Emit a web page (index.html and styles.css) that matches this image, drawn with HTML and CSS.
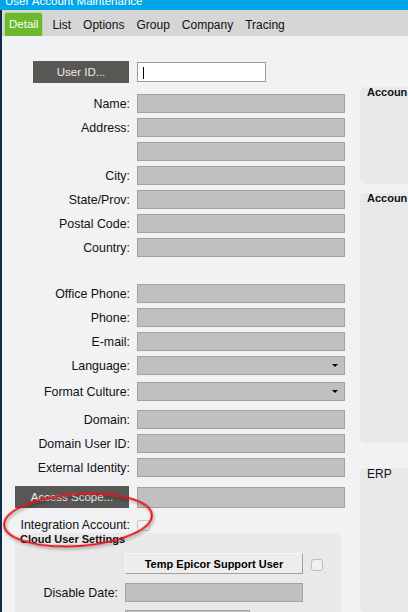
FILE: index.html
```html
<!DOCTYPE html>
<html lang="en">
<head>
<meta charset="UTF-8">
<meta name="viewport" content="width=device-width, initial-scale=1.0">
<title>User Account Maintenance</title>
<link rel="stylesheet" href="styles.css">
</head>
<body>

<div class="window">
    <div class="titlebar"><span>User Account Maintenance</span></div>

    <div class="frame">
        <!-- Tabs -->
        <div class="tabs">
            <div class="tab active">Detail</div>
            <div class="tab">List</div>
            <div class="tab">Options</div>
            <div class="tab">Group</div>
            <div class="tab">Company</div>
            <div class="tab">Tracing</div>
        </div>

        <div class="content">
            <!-- Detail form -->
            <div class="form">
                <div class="row row-btn row-id">
                    <button class="dark-btn btn-userid">User ID...</button>
                    <div class="field field-white"><span class="caret"></span></div>
                </div>
                <div class="row"><label>Name:</label><input class="field" readonly></div>
                <div class="row"><label>Address:</label><input class="field" readonly></div>
                <div class="row"><label></label><input class="field" readonly></div>
                <div class="row"><label>City:</label><input class="field" readonly></div>
                <div class="row"><label>State/Prov:</label><input class="field" readonly></div>
                <div class="row"><label>Postal Code:</label><input class="field" readonly></div>
                <div class="row row-gap-lg"><label>Country:</label><input class="field" readonly></div>

                <div class="row"><label>Office Phone:</label><input class="field" readonly></div>
                <div class="row"><label>Phone:</label><input class="field" readonly></div>
                <div class="row"><label>E-mail:</label><input class="field" readonly></div>
                <div class="row row-gap-sm"><label>Language:</label><div class="field combo"><span class="arrow"></span></div></div>
                <div class="row row-gap-md"><label>Format Culture:</label><div class="field combo"><span class="arrow"></span></div></div>

                <div class="row"><label>Domain:</label><input class="field" readonly></div>
                <div class="row"><label>Domain User ID:</label><input class="field" readonly></div>
                <div class="row row-gap-md"><label>External Identity:</label><input class="field" readonly></div>
                <div class="row row-btn">
                    <button class="dark-btn btn-scope">Access Scope...</button>
                    <input class="field field-tall" readonly>
                </div>
                <div class="row row-check">
                    <label>Integration Account:</label>
                    <span class="checkbox"></span>
                </div>

                <!-- Cloud settings -->
                <div class="cloud">
                    <h4 class="cloud-title">Cloud User Settings</h4>
                    <div class="cloud-row cloud-row-btn">
                        <span></span>
                        <button class="light-btn">Temp Epicor Support User</button>
                        <span class="checkbox checkbox-round"></span>
                    </div>
                    <div class="cloud-row">
                        <label>Disable Date:</label>
                        <input class="field" readonly>
                    </div>
                    <div class="cloud-row">
                        <label></label>
                        <input class="field field-short" readonly>
                    </div>
                </div>
            </div>

            <!-- Right side groups (cut off by the window edge) -->
            <div class="side">
                <div class="group group-a"><h4>Accoun</h4></div>
                <div class="group group-b"><h4>Accoun</h4></div>
                <div class="group group-c"><h4 class="plain">ERP</h4></div>
            </div>
        </div>
    </div>

    <!-- red markup ellipse drawn over the screenshot -->
    <svg class="highlight" width="170" height="70" viewBox="0 0 170 70">
        <defs>
            <filter id="soft" x="-10%" y="-20%" width="120%" height="140%">
                <feDropShadow dx="1" dy="2" stdDeviation="1.4" flood-color="#000" flood-opacity="0.35"/>
            </filter>
        </defs>
        <ellipse cx="78" cy="32" rx="74" ry="26" transform="rotate(-4 78 32)"
                 fill="none" stroke="#e3141b" stroke-width="2" filter="url(#soft)"/>
    </svg>
</div>

</body>
</html>
```

FILE: styles.css
```css
/* Base */
body {
    margin: 0;
    width: 408px;
    height: 612px;
    overflow: hidden;
    font-family: "Liberation Sans", Arial, sans-serif;
    background-color: #f2f2f4;
    color: #111;
}

.window {
    position: relative;
    height: 612px;
    overflow: hidden;
}

/* Title bar (cut off at the top) */
.titlebar {
    height: 10px;
    background-color: #00a6e6;
    overflow: hidden;
}
.titlebar span {
    display: block;
    margin: -5px 0 0 5px;
    font-size: 11.5px;
    line-height: 12px;
    color: #fff;
}

.frame {
    display: flex;
    flex-direction: column;
    height: 602px;
    overflow: hidden;
    border-left: 2px solid #0c2c4c;
}

/* Tabs */
.tabs {
    display: flex;
    flex: none;
    height: 26px;
    padding-left: 2px;
    background-color: #d6d6d6;
}
.tab {
    padding: 5px 6px 0;
    font-size: 12px;
    line-height: 21px;
    color: #111;
}
.tab.active {
    box-sizing: border-box;
    height: 24px;
    margin: 2px 3px 0 0;
    padding: 0 4px;
    font-size: 11.5px;
    line-height: 22px;
    color: #fff;
    background-color: #6cb92e;
    border: 1px solid #b2dc92;
    border-bottom: none;
    border-radius: 3px 3px 0 0;
}

/* Content */
.content {
    display: flex;
    flex: 1;
    min-height: 0;
    overflow: hidden;
}
.form {
    flex: none;
    width: 343px;
    padding-top: 25px;
}

.row {
    display: grid;
    grid-template-columns: 128px 208px;
    column-gap: 7px;
    align-items: center;
    height: 19px;
    margin-bottom: 5px;
}
.row label {
    text-align: right;
    font-size: 12.4px;
    white-space: nowrap;
}
.row-id {
    margin-bottom: 11px;
}
.row-btn {
    height: 22px;
}
.row-gap-lg { margin-bottom: 27px; }
.row-gap-sm { margin-bottom: 7px; }
.row-gap-md { margin-bottom: 9px; }
.row-check {
    height: 12px;
    margin: 10px 0 3px;
}

.field {
    box-sizing: border-box;
    width: 100%;
    height: 19px;
    margin: 0;
    padding: 0;
    background-color: #c0c0c0;
    border: 1px solid #a2a2a2;
    border-radius: 0;
    outline: none;
}
.field-tall {
    height: 21px;
}
.field-white {
    width: 129px;
    height: 20px;
    background-color: #fff;
    border-color: #9c9c9c;
}
.caret {
    display: block;
    width: 1px;
    height: 12px;
    margin: 4px 0 0 5px;
    background-color: #000;
}

.combo {
    display: flex;
    align-items: center;
    justify-content: flex-end;
    padding-right: 6px;
}
.arrow {
    width: 0;
    height: 0;
    border-left: 3px solid transparent;
    border-right: 3px solid transparent;
    border-top: 3px solid #000;
}

/* Buttons */
.dark-btn {
    justify-self: end;
    height: 22px;
    margin-right: 1px;
    padding: 0;
    font-family: inherit;
    font-size: 11.5px;
    color: #ececec;
    background-color: #595754;
    border: none;
}
.btn-userid { width: 96px; }
.btn-scope { width: 114px; }

.light-btn {
    box-sizing: border-box;
    width: 178px;
    height: 21px;
    padding: 0;
    font-family: inherit;
    font-size: 11px;
    font-weight: bold;
    color: #000;
    background-color: #ededed;
    border: 1px solid;
    border-color: #f6f6f6 #a0a0a0 #a0a0a0 #f6f6f6;
}

.checkbox {
    box-sizing: border-box;
    display: block;
    width: 13px;
    height: 11px;
    border: 1px solid #c6c6c6;
    border-radius: 2px;
}
.checkbox-round {
    width: 12px;
    height: 12px;
    margin-top: 6px;
    border-color: #bdbdbd;
    border-radius: 3px;
    background-color: #f0f0f0;
}

/* Cloud User Settings group */
.cloud {
    width: 326px;
    height: 80px;
    margin-left: 13px;
    background-color: #e9e9e9;
    border-radius: 6px 6px 0 0;
}
.cloud-title {
    margin: 0;
    padding-left: 5px;
    font-size: 11px;
    line-height: 12px;
}
.cloud-row {
    display: grid;
    grid-template-columns: 103px 178px 12px;
    column-gap: 7px;
    align-items: center;
    height: 19px;
    margin-top: 8px;
}
.cloud-row-btn {
    height: 21px;
    margin-top: 8px;
    column-gap: 8px;
    grid-template-columns: 102px 178px 12px;
    align-items: start;
}
.cloud-row label {
    text-align: right;
    font-size: 12.4px;
}
.cloud-row-btn + .cloud-row {
    margin-top: 9px;
}
.field-short {
    width: 125px;
}

/* Right side groups */
.side {
    flex: 1;
    padding-left: 15px;
    overflow: hidden;
}
.group {
    margin-right: -20px;
    background-color: #e9e9e9;
    border-radius: 5px;
}
.group h4 {
    margin: 0;
    padding-left: 7px;
    font-size: 11px;
    line-height: 11px;
    white-space: nowrap;
}
.group h4.plain {
    font-weight: normal;
    font-size: 12px;
    line-height: 12px;
}
.group-a {
    height: 97px;
    margin-top: 51px;
}
.group-b {
    height: 250px;
    margin-top: 9px;
}
.group-c {
    height: 144px;
    margin-top: 25px;
}

/* Markup ellipse */
.highlight {
    position: absolute;
    left: 0;
    top: 488px;
}
```
